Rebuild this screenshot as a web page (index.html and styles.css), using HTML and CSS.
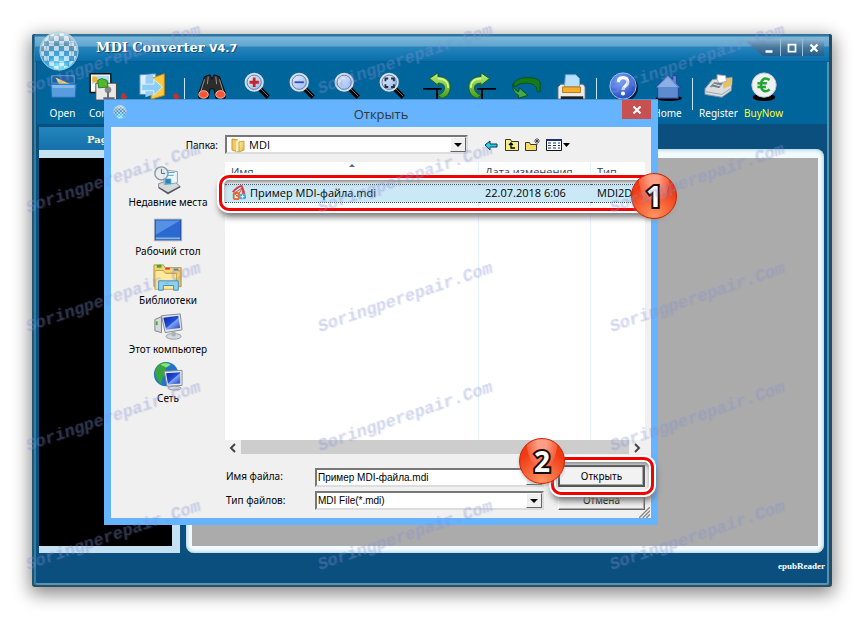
FILE: index.html
```html
<!DOCTYPE html>
<html lang="ru">
<head>
<meta charset="utf-8">
<title>MDI Converter</title>
<link rel="stylesheet" href="styles.css">
</head>
<body>
<svg class="defs" aria-hidden="true">
  <defs>
    <linearGradient id="lens" x1="0" y1="0" x2="1" y2="1"><stop offset="0" stop-color="#eef6ff"/><stop offset="1" stop-color="#8fb2ec"/></linearGradient>
    <linearGradient id="green" x1="0" y1="0" x2="0" y2="1"><stop offset="0" stop-color="#c4f27a"/><stop offset="1" stop-color="#3f9c1c"/></linearGradient>
    <linearGradient id="screen" x1="0" y1="0" x2="1" y2="1"><stop offset="0" stop-color="#0a1ea8"/><stop offset=".5" stop-color="#2450dc"/><stop offset=".55" stop-color="#7fa4f4"/><stop offset="1" stop-color="#1c3cc0"/></linearGradient>
    <linearGradient id="folder" x1="0" y1="0" x2="1" y2="1"><stop offset="0" stop-color="#fff0b0"/><stop offset="1" stop-color="#e3b33c"/></linearGradient>
    <radialGradient id="ball" cx=".5" cy=".9" r=".9"><stop offset="0" stop-color="#8ff0ff"/><stop offset=".35" stop-color="#3aa4e0"/><stop offset=".65" stop-color="#5f94b4"/><stop offset="1" stop-color="#d4e2ea"/></radialGradient>
    <radialGradient id="helpball" cx=".4" cy=".3" r=".8"><stop offset="0" stop-color="#7fa8ff"/><stop offset="1" stop-color="#173fb8"/></radialGradient>
    <pattern id="checks" width="10" height="10" patternUnits="userSpaceOnUse"><path d="M0 0h5v5H0zM5 5h5v5H5z" fill="#fff" fill-opacity=".65"/></pattern>
    <symbol id="globe" viewBox="0 0 40 40">
      <circle cx="20" cy="20" r="19" fill="url(#ball)" stroke="#b4d4e6"/>
      <circle cx="20" cy="20" r="18" fill="url(#checks)"/>
      <path d="M20 2v36M11 4Q3 20 11 36M29 4q8 16 0 32M2 20h36M5 11q15 5 30 0M5 29q15 5 30 0" fill="none" stroke="#3a86b4" stroke-opacity=".35"/>
    </symbol>
    <symbol id="magnifier" viewBox="0 0 32 32">
      <path d="M18 18l10 10" stroke="#000" stroke-width="5"/><path d="M19 18l9 9" stroke="#777" stroke-width="1"/>
      <circle cx="13" cy="12" r="9" fill="url(#lens)" stroke="#d8dde2" stroke-width="2.5"/><circle cx="13" cy="12" r="7.6" fill="none" stroke="#5c78b8"/>
    </symbol>
    <symbol id="turn" viewBox="0 0 32 32">
      <path d="M1 19h20M16 19v12" stroke="#000" stroke-width="2"/>
      <path d="M8 8L17 2v4c9 0 14 5 13 13-1 6-4 9-9 10l-4-3c5-2 7-5 7-8 0-4-3-5-7-5l1 3z" fill="url(#green)" stroke="#215c12"/>
      <path d="M17 8c7 0 11 4 11 10" fill="none" stroke="#d9ffa0" stroke-width="1.5"/>
    </symbol>
  </defs>
</svg>

<main class="window">
  <header class="titlebar">
    <svg class="logo"><use href="#globe"/></svg>
    <h1>MDI Converter <small>V4.7</small></h1>
    <div class="controls">
      <button type="button" aria-label="Minimize"><svg viewBox="0 0 12 12"><path d="M3 9h6" stroke="#fff" stroke-width="2"/></svg></button>
      <button type="button" aria-label="Maximize"><svg viewBox="0 0 12 12"><path d="M3 3h6v6H3z" fill="none" stroke="#fff" stroke-width="1.500"/></svg></button>
      <button type="button" aria-label="Close"><svg viewBox="0 0 12 12"><path d="M3 3l6 6m0-6l-6 6" stroke="#fff" stroke-width="2"/></svg></button>
    </div>
  </header>

  <nav class="toolbar">
    <button type="button"><svg viewBox="0 0 32 32"><path d="M4 5h24v8H4z" fill="#1d62a8" stroke="#5fa2d8"/><path d="M8 7l4 7h12z" fill="#ffd65e"/><path d="M3 14h27l-1 14H4z" fill="#5a9ce0" stroke="#2b6cb8"/><path d="M4 15h24v3H5z" fill="#84baf0"/></svg>Open</button>
    <button type="button"><svg viewBox="0 0 32 32"><g transform="translate(-3 0)"><path d="M0 3h22v20H0z" fill="#fff" stroke="#111" stroke-width="1.500"/><path d="M2 5h18v16H2z" fill="#a9ddf8"/><circle cx="5" cy="9" r="3" fill="#ffb020"/><path d="M2 14l4-2 4 4 4-3v8H2z" fill="#fff"/><path d="M6 13h22v18H6z" fill="#e9e9e9" stroke="#444"/><circle cx="19" cy="20" r="3.500" fill="#888"/><path d="M19 22v7m-5 0h12" stroke="#666" stroke-width="2"/><path d="M8 10l4-2 6 2 1 7-10 1z" fill="#52b92c" stroke="#26791a"/></g><path d="M30 24h5v3h2l-4 5-4-5h1z" fill="#c9302c"/></svg>Convert</button>
    <button type="button"><svg viewBox="0 0 32 32"><path d="M2 4l17-1v22H2z" fill="#dceeff" stroke="#4f8ac4"/><path d="M14 8l14-5v23l-14 4z" fill="#ffc83d" stroke="#c58c12"/><path d="M8 5l8-2v22l-8 3z" fill="#9bccf4"/><path d="M4 14h13V9l9 8-9 9v-5H4z" fill="#8bcdf6" stroke="#d8f1ff"/><path d="M38 24h5v3h2l-4 5-4-5h1z" fill="#c9302c"/></svg></button>
    <i class="bar wide"></i>
    <button type="button" aria-label="Find"><svg viewBox="0 0 32 32"><path d="M8 6l6-2 2 5 2-5 6 2 6 17v6H20l-2-10h-4l-2 10H2v-6z" fill="#2c2c2c" stroke="#0a0a0a"/><path d="M8 9L4 22M24 9l4 13M12 6l-1 8M20 6l1 8" stroke="#999"/><ellipse cx="7" cy="25" rx="5" ry="4" fill="#ff5438" stroke="#ffc0a8"/><ellipse cx="25" cy="25" rx="5" ry="4" fill="#ff5438" stroke="#ffc0a8"/></svg></button>
    <button type="button" aria-label="Zoom in"><svg viewBox="0 0 32 32"><use href="#magnifier"/><path d="M8 12h10M13 7v10" stroke="#c6262a" stroke-width="3"/></svg></button>
    <button type="button" aria-label="Zoom out"><svg viewBox="0 0 32 32"><use href="#magnifier"/><path d="M8 12h10" stroke="#344db8" stroke-width="2"/></svg></button>
    <button type="button" aria-label="Actual size"><svg viewBox="0 0 32 32"><use href="#magnifier"/><path d="M8 12q1-5 6-5" fill="none" stroke="#fff" stroke-width="2"/></svg></button>
    <button type="button" aria-label="Fit"><svg viewBox="0 0 32 32"><use href="#magnifier"/><path d="M9 11V8h3m3 0h3v3m0 3v3h-3m-3 0H9v-3" fill="none" stroke="#243040" stroke-width="2"/></svg></button>
    <button type="button" aria-label="Undo"><svg viewBox="0 0 32 32"><use href="#turn"/></svg></button>
    <button type="button" aria-label="Redo"><svg class="mirrored" viewBox="0 0 32 32"><use href="#turn"/></svg></button>
    <button type="button" aria-label="Rotate"><svg viewBox="0 0 32 32"><path d="M1 14Q5 7 16 7q14 0 14 6v9h-3q0-9-12-9-9 0-11 4z" fill="#157a1d" stroke="#075010"/><path d="M1 14q1 7 6 8l1-4 9 8-10 3v-3Q0 23 1 14z" fill="#43a94b" stroke="#075010"/></svg></button>
    <button type="button" aria-label="Print"><svg viewBox="0 0 32 32"><path d="M4 14h24l2 3v13H1V17z" fill="#e9ecef" stroke="#606870"/><path d="M9 4h11l4 4v9H8z" fill="#b9e0fb" stroke="#70a8d0"/><path d="M6 17h19v6H6z" fill="#f6ae31" stroke="#b87408"/><path d="M4 27h24v4H4z" fill="#222"/></svg></button>
    <i class="bar"></i>
    <button type="button" aria-label="Help"><svg viewBox="0 0 32 32"><circle cx="18" cy="18" r="14" fill="#061a38"/><circle cx="16" cy="16" r="14" fill="url(#helpball)" stroke="#a8c4f8"/><path d="M11 12q0-5 5-5t5 5c0 4-5 4-5 8" fill="none" stroke="#fff" stroke-width="3.500"/><circle cx="16" cy="24" r="2.200" fill="#fff"/></svg></button>
    <button type="button"><svg viewBox="0 0 32 32"><ellipse cx="17" cy="29" rx="14" ry="3" fill="#000"/><path d="M2 18L16 4l5 5V5h4v8l5 5h-3v11H5V18z" fill="#5c8ccf" stroke="#243f98"/><path d="M16 6L5 17h21z" fill="#8cb0e6"/></svg>Home</button>
    <i class="bar"></i>
    <button type="button"><svg viewBox="0 0 32 32"><path d="M1 19L9 9l21-2-1 14-10 7L1 25z" fill="#d9dde0" stroke="#84909a"/><path d="M19 9l11-2v8l-9 4z" fill="#e4c264"/><path d="M14 9V4l9 1 1 6-8 2z" fill="#fff" stroke="#aab"/><path d="M6 17l5-5 9 1-4 6z" fill="#737d86"/><path d="M8 17l9 2m-7-5l8 2" stroke="#eee"/><path d="M2 22l17 3 9-6" fill="none" stroke="#9aa5ae"/></svg>Register</button>
    <button type="button" class="buy"><svg viewBox="0 0 32 32"><ellipse cx="16" cy="28" rx="12" ry="4" fill="#000"/><circle cx="16" cy="15" r="13" fill="#eef1f2" stroke="#bcc4c8"/><path d="M22 9.500q-7-4-9 3-1 8 4 9 3 0 5-2M9 13h10M9 17h9" fill="none" stroke="#21a52c" stroke-width="2.700"/></svg>BuyNow</button>
  </nav>

  <section class="workspace">
    <aside class="pages"><h2>Pages</h2><div class="thumbs"></div></aside>
    <div class="viewer"><div class="canvas"></div></div>
  </section>
  <footer class="status">epubReader</footer>

  <section class="dialog" role="dialog" aria-labelledby="dialog-title">
    <header class="dialog-title">
      <svg><use href="#globe"/></svg>
      <h2 id="dialog-title">Открыть</h2>
      <button type="button" aria-label="Закрыть"><svg viewBox="0 0 12 12"><path d="M3 3l6 6m0-6L3 9" stroke="#fff" stroke-width="1.800"/></svg></button>
    </header>
    <form class="dialog-body">
      <label class="place-label" for="folder-select">Папка:</label>
      <div class="location">
        <div class="combo folder-combo">
          <svg class="folder-icon" viewBox="0 0 16 16"><path d="M2 2l6 1v12l-6-2z" fill="#f2ca62" stroke="#c9982e"/><path d="M6 4l4-2v11l-4 2z" fill="#fff2bb"/><path d="M9 5l5-1v9l-5 2z" fill="url(#folder)" stroke="#cfa343"/></svg>
          <select id="folder-select"><option>MDI</option></select><span class="arrow"></span>
        </div>
        <button type="button" aria-label="Назад"><svg viewBox="0 0 16 16"><path d="M2 8l5-4v3h7v3H7v3z" fill="#19d7e8" stroke="#103050"/></svg></button>
        <button type="button" aria-label="Вверх"><svg viewBox="0 0 16 16"><path d="M1.500 13.500v-11h5l1 2h7v9z" fill="#f8ed86" stroke="#333"/><path d="M5 8l2-2 2 2M7 6v5h4" fill="none" stroke="#000" stroke-width="1.300"/></svg></button>
        <button type="button" aria-label="Новая папка"><svg viewBox="0 0 16 16"><path d="M.5 13.500v-8h4l1 2h6v6z" fill="#f8dc62" stroke="#333"/><path d="M12 1v7M9 4h6M10 2l4 4m0-4l-4 4" stroke="#333" stroke-width=".8"/></svg></button>
        <button type="button" class="view" aria-label="Вид"><svg viewBox="0 0 26 16"><path d="M.5 2.500h15v11H.5z" fill="#fff" stroke="#111"/><path d="M0 3h16" stroke="#17337c" stroke-width="2"/><path d="M2 6h3m2 0h3m2 0h2M2 8.500h3m2 0h3m2 0h2M2 11h3m2 0h3m2 0h2" stroke="#17337c"/><path d="M17 6h7l-3.500 4z"/></svg></button>
      </div>

      <ul class="places">
        <li><svg viewBox="0 0 32 32"><path d="M6 20l14-5 9 8-13 8-10-7z" fill="#d5dadd" stroke="#82898e"/><path d="M6 24l10 6 13-7" fill="none" stroke="#555" stroke-width="1.500"/><path d="M11 5l15 2v12l-14 2z" fill="#edf6fa" stroke="#8ba1ac"/><path d="M13 15h6v5h-6zM14 8h9m-9 3h8" fill="#2786b8" stroke="#489dca"/><circle cx="9" cy="9" r="7" fill="#e5eef2" fill-opacity=".8" stroke="#8b989f" stroke-width="1.500"/><path d="M9 4v5h4" fill="none" stroke="#4c6470"/></svg>Недавние места</li>
        <li><svg viewBox="0 0 32 32"><path d="M1.500 5.500h29v23h-29z" fill="#294bb0" stroke="#a3a9b2"/><path d="M3 7h26v20H3z" fill="#2b68d0"/><path d="M3 7h26L3 22z" fill="#5592e4"/><path d="M3 25h26v2H3z" fill="#83b8d6"/></svg>Рабочий стол</li>
        <li><svg viewBox="0 0 32 32"><path d="M1 5V2h10l2 3h17v20H1z" fill="#f4d578" stroke="#b99133"/><path d="M4 2h5v3H4z" fill="#31a932"/><path d="M13 5h5v2h-5z" fill="#d83a30"/><path d="M22 6h5v2h-5z" fill="#3278d0"/><path d="M2 8h9l2 3h12v17H2z" fill="#ffe8a0" stroke="#caa044"/><path d="M14 11h12m-2-3h5v18" fill="none" stroke="#caa044"/><path d="M6 29V19h21v10h-5v-5H11v5z" fill="#8ed0ef" stroke="#3e8cbb"/></svg>Библиотеки</li>
        <li><svg viewBox="0 0 32 32"><path d="M2 8l7-3v17l-7-2z" fill="#d5d9dc" stroke="#7b8286"/><path d="M4 10v4" stroke="#35b52b" stroke-width="2"/><path d="M9 4l20-2 2 17-18 3z" fill="#e2e6e9" stroke="#81888d"/><path d="M11 6l16-2 2 13-15 2z" fill="url(#screen)"/><ellipse cx="22" cy="26" rx="8" ry="3" fill="#d5dadd" stroke="#9299a0"/><path d="M20 21h4v5h-4z" fill="#aab1b6"/></svg>Этот компьютер</li>
        <li><svg viewBox="0 0 32 32"><circle cx="14" cy="14" r="13" fill="#2175c4"/><path d="M2 12Q4 2 13 1l5 3-5 4 2 4-5 6-1 7q-6-5-7-13z" fill="#38a63c"/><path d="M8 4q6-3 11 0l-5 3z" fill="#8be080"/><path d="M12 11l19-1v16l-16 1z" fill="#e5e9eb" stroke="#828a90"/><path d="M14 13l15-1v12l-13 1z" fill="url(#screen)"/><ellipse cx="23" cy="29" rx="7" ry="2" fill="#d5dadd" stroke="#9299a0"/></svg>Сеть</li>
      </ul>

      <div class="files">
        <div class="list">
          <table>
            <thead><tr><th class="name">Имя</th><th class="date">Дата изменения</th><th>Тип</th></tr></thead>
            <tbody><tr><td><span class="file"><svg viewBox="0 0 16 18"><path d="M1 8q5-6 10-7 3 6 4 14" fill="none" stroke="#d93a32" stroke-width="2"/><path d="M3 9l9-6-6 10zM12 3v8" fill="none" stroke="#d93a32"/><rect x="2" y="9" width="6" height="7" rx="2" fill="none" stroke="#e56a20" stroke-width="2"/><path d="M9 10h6v6H9z" fill="#55a8dc"/><path d="M10 13h4m-2-2v4" stroke="#fff"/></svg>Пример MDI-файла.mdi</span></td><td>22.07.2018 6:06</td><td>MDI2D</td></tr></tbody>
          </table>
          <svg class="sort" viewBox="0 0 8 4"><path d="M1 4l3-3 3 3z" fill="#3f7296"/></svg>
          <div class="callout row-callout"><b class="badge">1</b></div>
        </div>
        <div class="scrollbar"><svg viewBox="0 0 16 16"><path d="M10 4L6 8l4 4" fill="none" stroke="#444" stroke-width="2"/></svg><i></i><svg viewBox="0 0 16 16"><path d="M6 4l4 4-4 4" fill="none" stroke="#444" stroke-width="2"/></svg></div>
        <div class="fields">
          <label for="file-name">Имя файла:</label>
          <div class="combo"><input id="file-name" type="text" value="Пример MDI-файла.mdi"><span class="arrow"></span></div>
          <div class="action"><button type="submit" class="push primary">Открыть</button><div class="callout button-callout"><b class="badge">2</b></div></div>
          <label for="file-type">Тип файлов:</label>
          <div class="combo"><select id="file-type"><option>MDI File(*.mdi)</option></select><span class="arrow"></span></div>
          <button type="button" class="push">Отмена</button>
        </div>
      </div>
      <svg class="grip" viewBox="0 0 12 12"><path d="M0 12L12 0M4 12l8-8M8 12l4-4" stroke="#888" stroke-width="1.500"/></svg>
    </form>
  </section>
</main>

<div class="watermarks" aria-hidden="true">
  <span>Soringperepair.Com</span><span>Soringperepair.Com</span><span>Soringperepair.Com</span>
  <span>Soringperepair.Com</span><span>Soringperepair.Com</span><span>Soringperepair.Com</span>
  <span>Soringperepair.Com</span><span>Soringperepair.Com</span><span>Soringperepair.Com</span>
  <span>Soringperepair.Com</span><span>Soringperepair.Com</span><span>Soringperepair.Com</span>
  <span>Soringperepair.Com</span><span>Soringperepair.Com</span><span>Soringperepair.Com</span>
</div>
</body>
</html>
```
FILE: styles.css
```css
* { box-sizing: border-box; }
body {
  margin: 0;
  min-height: 100vh;
  padding: 34px 32px 33px;
  display: flex;
  background: #fff;
  font: 10px/14px "Noto Sans", "Liberation Sans", sans-serif;
  color: #000;
}
h1, h2, ul { margin: 0; padding: 0; }
button { margin: 0; padding: 0; border: 0; background: none; font: inherit; color: inherit; }
svg { display: block; flex: none; }
.defs { position: absolute; width: 0; height: 0; }

.window {
  position: relative;
  flex: 1;
  display: flex;
  flex-direction: column;
  padding: 0 7px;
  border-radius: 3px;
  background: #0a4f7e;
  border-bottom: 2px solid #344b58;
  box-shadow: inset 2px 0 #24546e, inset 4px 0 #337ea9, inset -3px 0 #274b60, inset -5px 0 #4f93bb, inset 0 -2px #5495bb, 0 5px 18px 2px #888;
}
.titlebar {
  height: 28px;
  margin: 0 -4px;
  padding-left: 4px;
  display: flex;
  align-items: center;
  background: linear-gradient(#2e749e 0 2px, #7ab7da 3px, #62a5ce 12px, #2785bd 13px, #086eaa 27px, #034e7e 28px);
}
.logo { width: 40px; height: 40px; margin-top: 6px; position: relative; z-index: 1; }
.titlebar h1 { flex: 1; margin-left: 17px; font: bold 13px/20px "DejaVu Serif", serif; color: #fff; text-shadow: 1px 1px #164c70; }
.titlebar small { font: bold 11px/20px "DejaVu Sans", sans-serif; }
.controls {
  display: flex;
  align-self: flex-start;
  margin: 5px 5px 0 0;
  padding-left: 15px;
  background: linear-gradient(#8db2cd, #47789e 50%, #235e8b);
  clip-path: polygon(0 0, 100% 0, 100% 100%, 20px 100%);
}
.controls button { width: 22px; height: 17px; display: grid; place-items: center; border-left: 1px solid #9ec1d8; }
.controls button:first-child { border: 0; }
.controls svg { width: 14px; height: 14px; }

.toolbar { height: 62px; margin: 0 -2px; padding: 9px 0 0 3px; display: flex; background: #00659a; color: #fff; }
.toolbar button { width: 45px; flex: none; display: flex; flex-direction: column; align-items: center; gap: 5px; line-height: 14px; }
.toolbar svg { width: 30px; height: 30px; overflow: visible; }
.toolbar .buy { color: #ffff20; }
.toolbar .mirrored { transform: scaleX(-1); }
.bar { width: 6px; height: 32px; margin-top: 7px; background: linear-gradient(90deg, transparent 2px, #c8e4f2 2px 3px, transparent 3px); }
.bar.wide { width: 14px; background: linear-gradient(90deg, transparent 9px, #c8e4f2 9px 10px, transparent 10px); }

.workspace { flex: 1; display: flex; gap: 6px; padding-top: 3px; }
.pages { width: 141px; display: flex; flex-direction: column; background: #c5e0f0; border-bottom: 7px solid #c5e0f0; }
.pages h2 { height: 23px; padding-left: 48px; background: linear-gradient(#2386bd, #1670aa); font: bold 10px/26px "DejaVu Serif", serif; color: #fff8d0; }
.thumbs { flex: 1; margin: 8px 8px 0 0; background: #000; }
.viewer { flex: 1; margin: 22px 1px 0 0; padding: 9px 6px 7px; display: flex; border-radius: 8px; background: #f2fbfd; box-shadow: inset 0 0 4px #82b8c9; }
.canvas { flex: 1; background: #ababab; }
.status { height: 32px; padding-top: 5px; text-align: right; font: bold 9px/16px "Liberation Serif", serif; color: #fff; }

.dialog {
  position: absolute;
  inset: 65px 174px 60px 72px;
  display: flex;
  flex-direction: column;
  padding: 0 7px 7px;
  background: #66b3ff;
  border: 1px solid #4f94d8;
  border-width: 1px 0 0;
}
.dialog-title { height: 27px; display: flex; align-items: flex-start; }
.dialog-title > svg { width: 14px; height: 14px; margin: 5px 0 0 2px; }
.dialog-title h2 { flex: 1; padding-left: 13px; text-align: center; font: 13px/28px "Open Sans", sans-serif; color: #303840; }
.dialog-title button { width: 29px; height: 19px; display: grid; place-items: center; background: #c75050; }
.dialog-title button svg { width: 14px; height: 14px; }
.dialog-body {
  position: relative;
  flex: 1;
  display: grid;
  grid-template: 35px 1fr / 114px 1fr;
  padding: 0 6px 8px 0;
  background: #f0f0f0;
}
.place-label { padding: 11px 7px 0 0; text-align: right; }
.location { display: flex; align-items: center; gap: 5px; }
.location button svg { width: 16px; height: 16px; }
.location .view svg { width: 26px; }
.combo { position: relative; display: flex; height: 19px; border: 2px solid #777; border-color: #777 #ddd #ddd #777; background: #fff; }
.folder-combo { width: 243px; margin-right: 10px; }
.folder-icon { width: 16px; height: 16px; margin-left: 3px; }
.combo input, .combo select { appearance: none; flex: 1; min-width: 0; margin: 0; padding: 0 1px; border: 0; background: none; font: 10px/15px "Liberation Sans", sans-serif; color: #000; }
.folder-combo select { padding-left: 3px; font: 11px/15px "Open Sans", sans-serif; }
.arrow { width: 16px; border: 1px solid #fff; border-color: #fff #666 #666 #fff; background: #f0f0f0; display: grid; place-items: center; }
.arrow::after { content: ""; border: 4px solid transparent; border-width: 4px 4px 0; border-top-color: #000; }

.places { list-style: none; padding-top: 3px; display: flex; flex-direction: column; }
.places li { height: 49px; display: flex; flex-direction: column; align-items: center; line-height: 14px; white-space: nowrap; }
.places svg { width: 32px; height: 30px; }

.files { min-width: 0; display: flex; flex-direction: column; }
.list { position: relative; flex: 1; background: linear-gradient(#e5f1fb, #e5f1fb) 253px 0 / 1px 100% no-repeat, linear-gradient(#e5f1fb, #e5f1fb) 365px 0 / 1px 100% no-repeat, #fff; }
.list table { width: 100%; table-layout: fixed; border-collapse: collapse; font: 11px/16px "Open Sans", sans-serif; }
.list .name { width: 254px; }
.list .date { width: 112px; }
.list th { height: 22px; padding: 0 6px 2px; text-align: left; font-weight: normal; color: #304458; white-space: nowrap; }
.list td { height: 18px; padding: 0 6px; border: 1px dotted #35536c; border-width: 1px 0; background: #cbe8f6; white-space: nowrap; overflow: hidden; }
.file { display: flex; align-items: center; gap: 3px; }
.file svg { width: 16px; height: 16px; }
.sort { position: absolute; left: 123px; top: 1px; width: 8px; height: 4px; }
.callout { position: absolute; border: 3px solid #f40000; border-radius: 10px; box-shadow: 0 0 0 2px #fff, inset 0 0 0 2px #fff, inset 0 3px 5px 1px #777, 1px 5px 6px 1px #777; pointer-events: none; }
.row-callout { inset: 13px -17px auto -6px; height: 36px; }
.button-callout { inset: -8px -9px -8px -7px; }
.badge {
  position: absolute;
  width: 46px;
  height: 46px;
  display: grid;
  place-items: center;
  border: 1px solid #c92000;
  border-radius: 50%;
  background: radial-gradient(ellipse at 50% 5%, #ff9e84 0 15%, #f85f3c 48%, transparent 50%), radial-gradient(circle at 50% 95%, #ff9460, #f03a14 65%);
  box-shadow: 0 2px 3px #9998;
  font: bold 28px/44px "Noto Sans", sans-serif;
  color: #fff;
  -webkit-text-stroke: 4px #190b08;
  paint-order: stroke fill;
}
.row-callout .badge { right: -18px; top: -5px; }
.button-callout .badge { left: -35px; top: -22px; }
.scrollbar { height: 16px; display: flex; background: #f0f0f0; }
.scrollbar svg { width: 16px; height: 16px; }
.scrollbar i { flex: 1; margin-bottom: 2px; background: #cdcdcd; }
.fields { display: grid; grid-template: 22px 20px / 90px 1fr 87px; row-gap: 3px; align-items: end; padding-top: 9px; }
.fields label { align-self: center; padding-left: 1px; }
.fields .combo { margin-right: 14px; }
.action { position: relative; height: 22px; }
.push { width: 100%; height: 20px; background: #f2f2f2; border: 1px solid #fff; border-color: #fff #666 #666 #fff; box-shadow: inset -1px -1px #aaa; }
.push.primary { height: 22px; border: 2px solid #555; }
.grip { position: absolute; right: 1px; bottom: 0; width: 11px; height: 11px; }

.watermarks { position: absolute; inset: 0; display: grid; grid-template: repeat(5, 119px) / repeat(3, 292px); padding-left: 18px; overflow: hidden; pointer-events: none; }
.watermarks span { width: 190px; align-self: center; text-align: center; transform: rotate(-19deg); font: italic bold 17px/20px "Liberation Mono", monospace; color: #8c9ddc44; text-shadow: 1px 1px 1px #777fc02a; }
```
